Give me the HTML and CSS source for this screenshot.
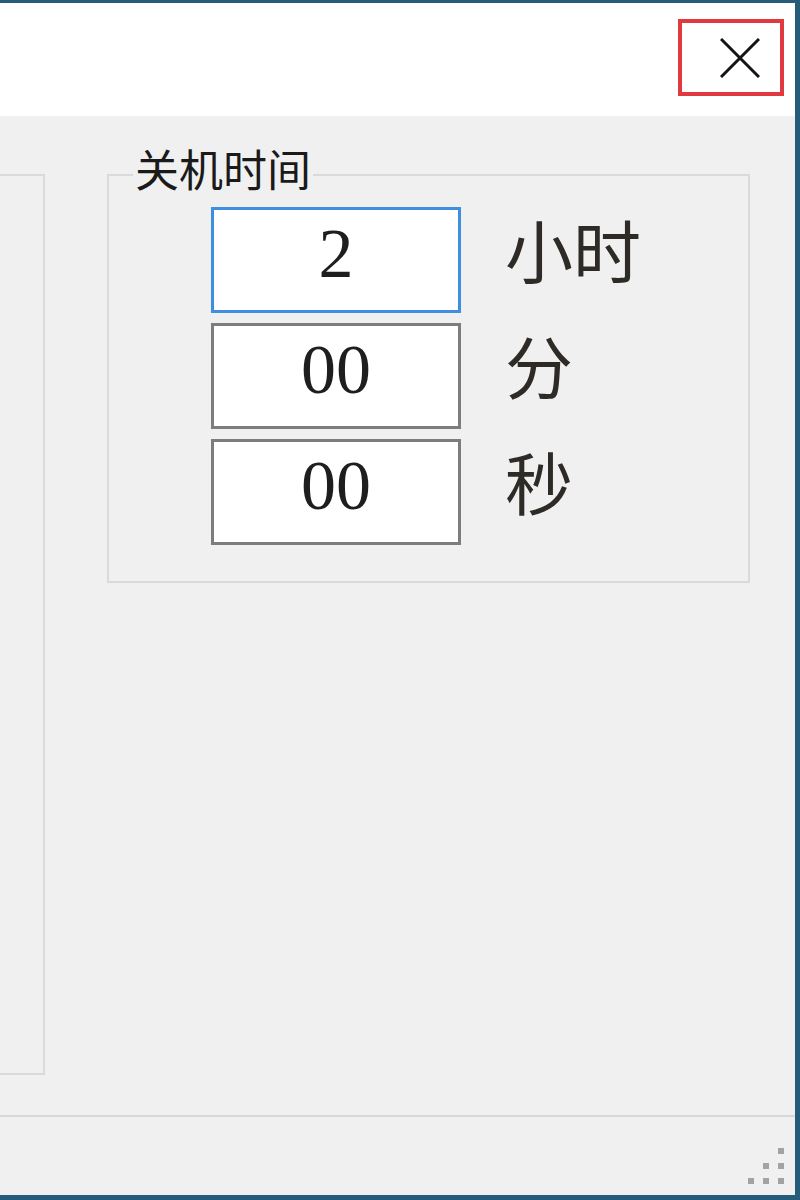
FILE: index.html
```html
<!DOCTYPE html>
<html lang="zh-CN">
<head>
  <meta charset="UTF-8" />
  <meta name="viewport" content="width=device-width, initial-scale=1.0"/>
  <title>定时关机</title>
  <link rel="stylesheet" href="styles.css">
</head>
<body>
  <div class="window">
    <div class="titlebar">
      <button class="close-btn" title="关闭">
        <svg width="40" height="40" viewBox="0 0 40 40">
          <path d="M1 1 L39 39 M39 1 L1 39" stroke="#151515" stroke-width="3" fill="none"/>
        </svg>
      </button>
    </div>

    <div class="client">
      <div class="content">
        <div class="group group-left"></div>

        <div class="group group-time">
          <span class="group-title">关机时间</span>
          <div class="time-grid">
            <input class="time-input focused" type="text" value="2">
            <span class="time-unit">小时</span>
            <input class="time-input" type="text" value="00">
            <span class="time-unit">分</span>
            <input class="time-input" type="text" value="00">
            <span class="time-unit">秒</span>
          </div>
        </div>
      </div>

      <!-- status bar with size grip -->
      <div class="statusbar">
        <div class="grip">
          <i></i><i></i><i></i>
          <i></i><i></i><i></i>
          <i></i><i></i><i></i>
        </div>
      </div>
    </div>
  </div>
</body>
</html>
```

FILE: styles.css
```css
* { box-sizing: border-box; }
body {
  margin: 0;
  background: #f0f0f0;
  font-family: "Noto Sans CJK SC", sans-serif;
}
.window {
  width: 800px;
  height: 1200px;
  display: flex;
  flex-direction: column;
  border-top: 3px solid #245c7a;
  border-right: 5px solid #245c7a;
  border-bottom: 5px solid #245c7a;
}
.titlebar {
  height: 113px;
  background: #fff;
  display: flex;
  justify-content: flex-end;
  align-items: flex-start;
  padding: 16px 11px 0 0;
}
.close-btn {
  width: 106px;
  height: 77px;
  border: 4px solid #e0393e;
  background: #fff;
  display: flex;
  align-items: center;
  justify-content: center;
  padding: 0 0 0 18px;
  cursor: pointer;
}
.client {
  flex: 1;
  display: flex;
  flex-direction: column;
  background: #f0f0f0;
}
.content {
  flex: 1;
  display: flex;
  align-items: flex-start;
  gap: 62px;
  padding-top: 58px;
  border-bottom: 2px solid #d7d7d7;
}
.group {
  position: relative;
  border: 2px solid #dadada;
}
.group-left {
  width: 45px;
  height: 901px;
  border-left: none;
}
.group-time {
  width: 643px;
  height: 409px;
  padding: 31px 0 0 102px;
}
.group-title {
  position: absolute;
  top: -30px;
  left: 24px;
  padding: 0 2px;
  background: #f0f0f0;
  font-size: 44px;
  line-height: 44px;
  color: #1a1a1a;
}
.time-grid {
  display: grid;
  grid-template-columns: 250px auto;
  row-gap: 10px;
  column-gap: 44px;
  align-items: start;
}
.time-input {
  width: 250px;
  height: 106px;
  margin: 0;
  padding: 0 0 12px;
  border: 3px solid #7d7d7d;
  background: #fff;
  font-family: "Liberation Serif", serif;
  font-size: 70px;
  color: #1e1e1e;
  text-align: center;
  outline: none;
}
.time-input.focused { border-color: #3f8fe0; }
.time-unit {
  padding-top: 8px;
  font-size: 68px;
  line-height: 68px;
  color: #2e2a26;
}
.statusbar {
  height: 78px;
  display: flex;
  justify-content: flex-end;
  align-items: flex-end;
  padding: 0 11px 11px 0;
}
.grip {
  display: grid;
  grid-template-columns: repeat(3, 6px);
  grid-auto-rows: 6px;
  gap: 9px;
}
.grip i { background: #a3a3a3; }
.grip i:nth-child(1), .grip i:nth-child(2), .grip i:nth-child(4) { background: none; }
```
